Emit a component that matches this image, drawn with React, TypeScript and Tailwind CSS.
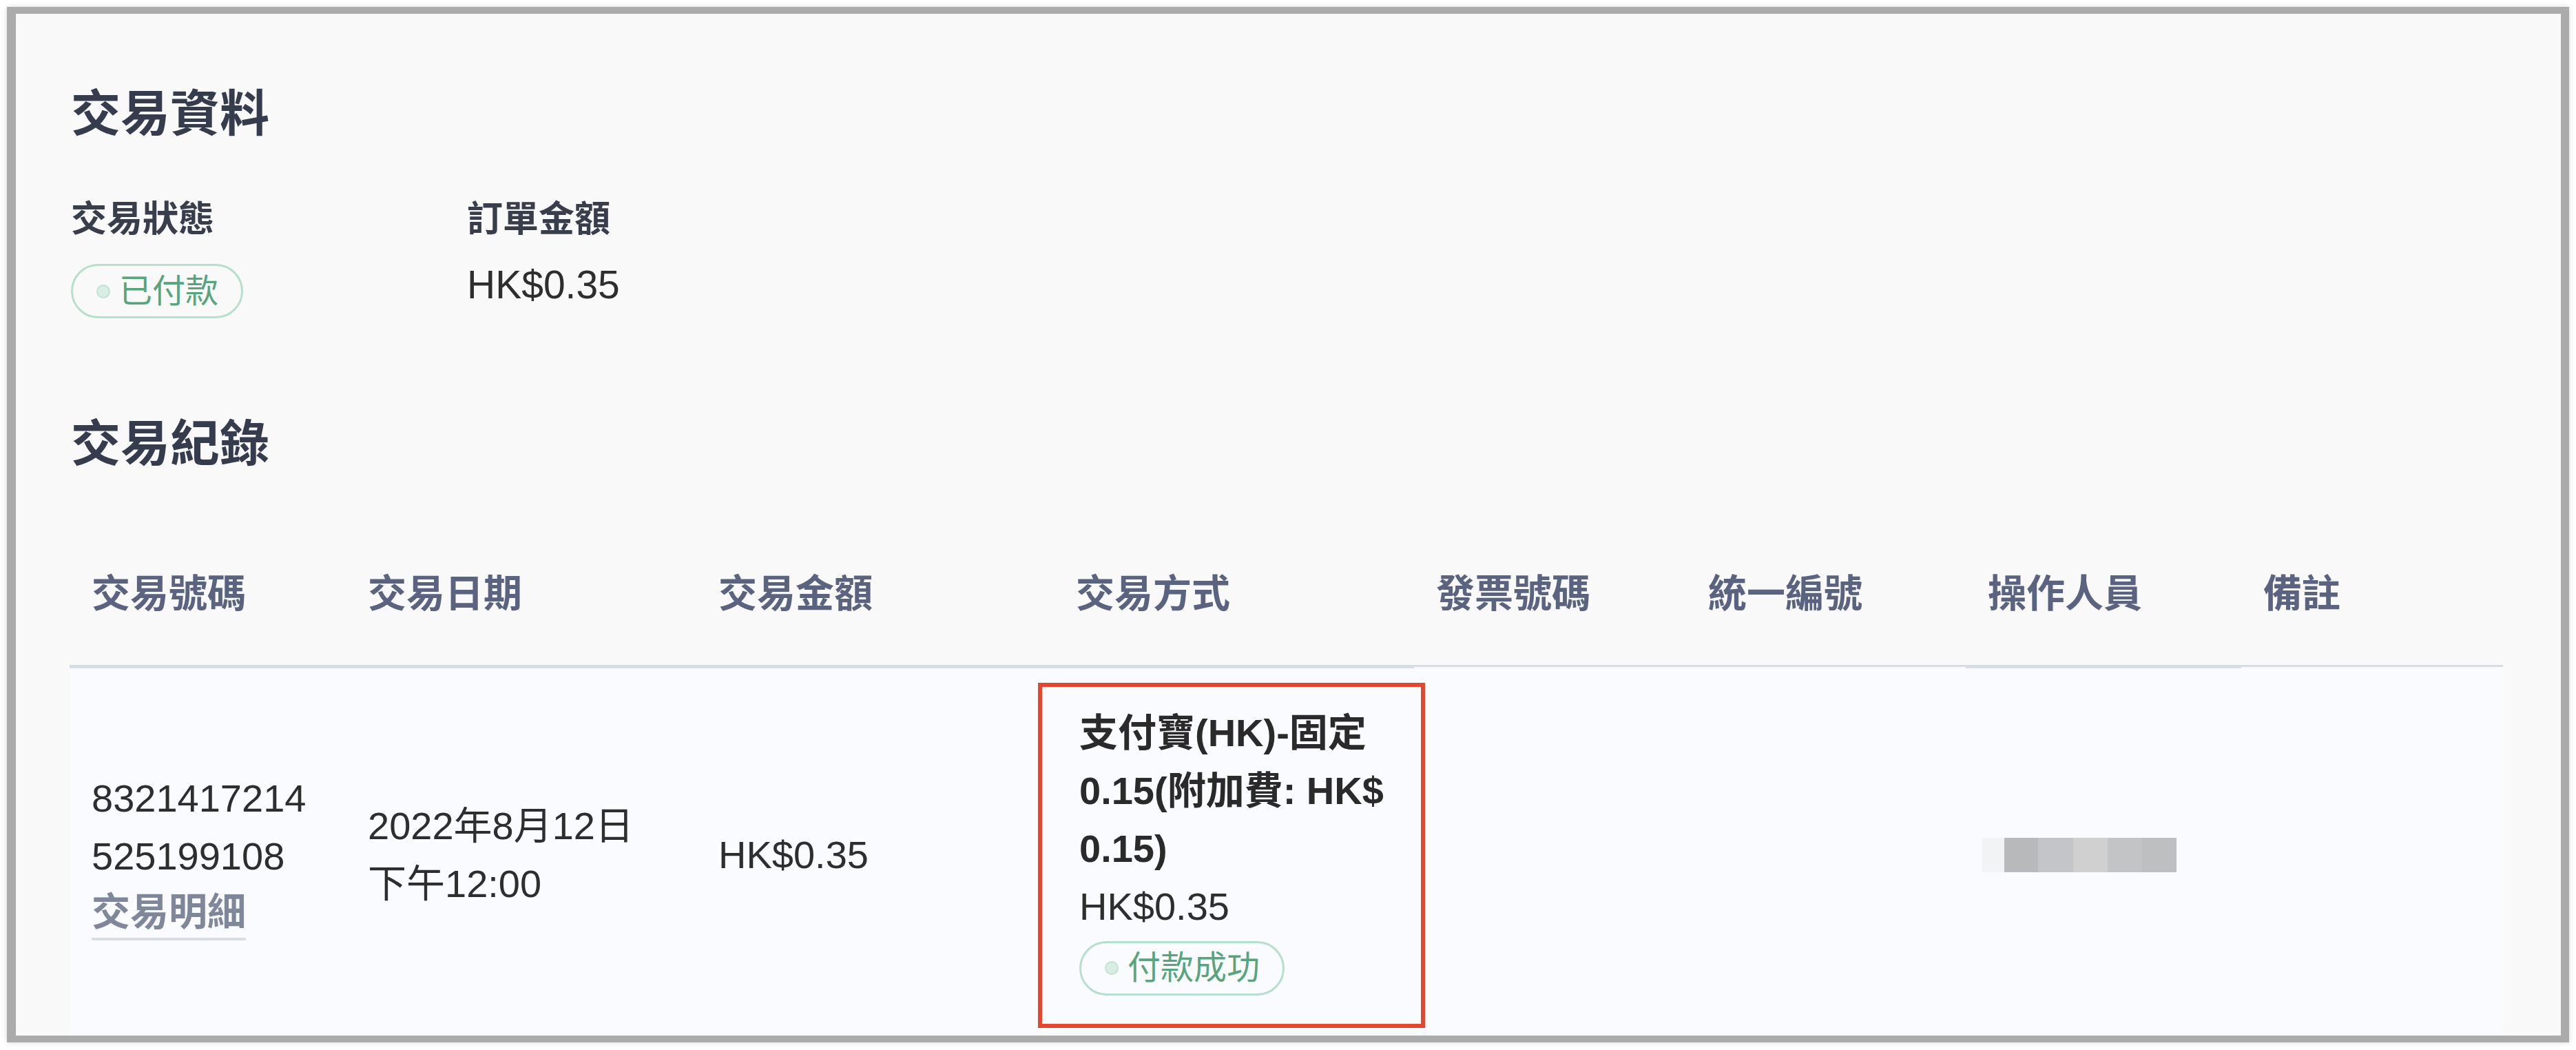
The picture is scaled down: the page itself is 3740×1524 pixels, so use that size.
const Badge = ({ text }: { text: string }) => {
  return (
    <span className="inline-flex h-[79px] items-center rounded-full border-[3px] border-[#b4e0cc] pl-[34px] pr-[33px] text-[48px] leading-none text-[#58a57d]">
      <span className="mr-[13px] h-[20px] w-[20px] rounded-full border-2 border-[#c2e2d3] bg-[#d6eee3]" />
      {text}
    </span>
  )
}

const headers = [
  { label: '交易號碼', cls: 'w-[401px] border-b-[5px]' },
  { label: '交易日期', cls: 'w-[509px] border-b-[5px]' },
  { label: '交易金額', cls: 'w-[519px] border-b-[5px]' },
  { label: '交易方式', cls: 'w-[523px] border-b-[5px]' },
  { label: '發票號碼', cls: 'w-[395px] border-b-[3px]' },
  { label: '統一編號', cls: 'w-[406px] border-b-[3px]' },
  { label: '操作人員', cls: 'w-[400px] border-b-[5px]' },
  { label: '備註', cls: 'w-[380px] border-b-[3px]' },
]

// pixelated name of the operator
const blur = [
  'w-[32px] bg-[#f2f3f5]',
  'w-[49px] bg-[#b8b9bb]',
  'w-[51px] bg-[#c4c5c8]',
  'w-[50px] bg-[#d0d0d1]',
  'w-[50px] bg-[#c3c4c6]',
  'w-[50px] bg-[#bebfc1]',
]

const App = () => {
  return (
    <div className="min-h-screen bg-white p-[10px] font-['Liberation_Sans','Noto_Sans_CJK_TC',sans-serif]">
      <div className="h-[1503px] overflow-hidden border-y-[10px] border-l-[13px] border-r-[12px] border-[#ababab] bg-[#f9f9f9] shadow-[0_0_8px_rgba(0,0,0,0.15)]">
        <div className="pl-[80px] pt-[109px]">
          <h2 className="text-[72px] font-bold leading-none text-[#353c4e]">交易資料</h2>

          <div className="mt-[91px] flex">
            <div className="w-[575px]">
              <p className="text-[52px] font-semibold leading-none text-[#393e4d]">交易狀態</p>
              <div className="mt-[39px] flex">
                <Badge text="已付款" />
              </div>
            </div>
            <div>
              <p className="text-[52px] font-semibold leading-none text-[#393e4d]">訂單金額</p>
              <p className="mt-[41px] text-[57px] leading-none text-[#2e2e2e]">HK$0.35</p>
            </div>
          </div>

          <h2 className="mt-[146px] text-[72px] font-bold leading-none text-[#353c4e]">交易紀錄</h2>

          <div className="ml-[-2px] mt-[154px] w-[3533px]">
            <div className="flex items-start">
              {headers.map((h) => (
                <div key={h.label} className={`${h.cls} border-[#d6dee7] px-[32px] pb-[75px] text-[56px] font-bold leading-none text-[#5a6380]`}>
                  {h.label}
                </div>
              ))}
            </div>

            <div className="flex h-[542px] items-center bg-[#fafbfe] text-[56px] leading-[84px] text-[#2e2e2e]">
              <div className="w-[401px] px-[32px]">
                <p className="break-all">8321417214525199108</p>
                <a href="#" className="mt-[2px] block w-fit border-b-4 border-[#d6dee7] font-semibold leading-[74px] text-[#7f879a]">
                  交易明細
                </a>
              </div>
              <div className="w-[509px] px-[32px]">
                <p>2022年8月12日 下午12:00</p>
              </div>
              <div className="w-[519px] px-[32px]">
                <p>HK$0.35</p>
              </div>
              <div className="w-[523px] px-[32px]">
                <div className="-ml-[55px] -mr-[48px] border-[6px] border-[#e4472f] pb-[41px] pl-[54px] pr-[37px] pt-[25px]">
                  <p className="font-semibold text-[#2a2a2a]">支付寶(HK)-固定0.15(附加費: HK$ 0.15)</p>
                  <p>HK$0.35</p>
                  <div className="mt-[8px] flex">
                    <Badge text="付款成功" />
                  </div>
                </div>
              </div>
              <div className="w-[395px] px-[32px]" />
              <div className="w-[406px] px-[32px]" />
              <div className="w-[400px] pl-[24px]">
                <div className="flex h-[50px]">
                  {blur.map((b) => (
                    <div key={b} className={b} />
                  ))}
                </div>
              </div>
              <div className="w-[380px] px-[32px]" />
            </div>
          </div>
        </div>
      </div>
    </div>
  )
}

export default App
